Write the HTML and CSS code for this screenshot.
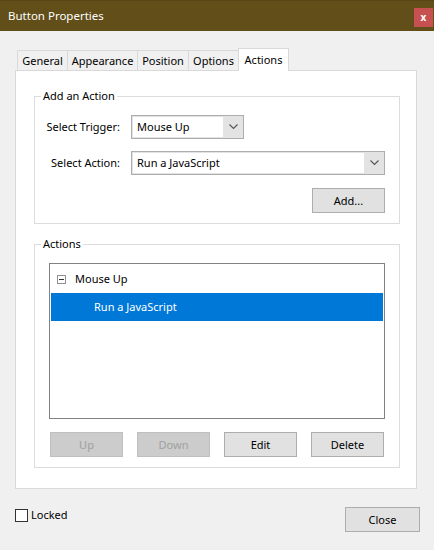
FILE: index.html
```html
<!DOCTYPE html>
<html>
<head>
<meta charset="utf-8">
<link rel="stylesheet" href="styles.css">
</head>
<body>
<div class="window">
  <div class="titlebar">
    <span class="title">Button Properties</span>
    <span class="close-x">x</span>
  </div>
  <div class="main">
    <div class="tabs">
      <div class="tab t1">General</div>
      <div class="tab t2">Appearance</div>
      <div class="tab t3">Position</div>
      <div class="tab t4">Options</div>
      <div class="tab t5 active">Actions</div>
    </div>
    <div class="panel">
      <fieldset class="group g1">
        <legend>Add an Action</legend>
        <div class="form">
          <label class="lbl">Select Trigger:</label>
          <div class="select short">
            <span class="field">Mouse Up</span>
            <span class="arrow"><svg width="9" height="6" viewBox="0 0 9 6"><polyline points="0.5,0.5 4.5,4.5 8.5,0.5" fill="none" stroke="#555" stroke-width="1.1"/></svg></span>
          </div>
          <label class="lbl">Select Action:</label>
          <div class="select long">
            <span class="field">Run a JavaScript</span>
            <span class="arrow"><svg width="9" height="6" viewBox="0 0 9 6"><polyline points="0.5,0.5 4.5,4.5 8.5,0.5" fill="none" stroke="#555" stroke-width="1.1"/></svg></span>
          </div>
        </div>
        <div class="add-row"><button class="btn">Add...</button></div>
      </fieldset>
      <fieldset class="group g2">
        <legend>Actions</legend>
        <div class="list">
          <div class="row parent"><span class="minus"></span><span>Mouse Up</span></div>
          <div class="row child selected">Run a JavaScript</div>
        </div>
        <div class="btns">
          <button class="btn disabled">Up</button>
          <button class="btn disabled">Down</button>
          <button class="btn">Edit</button>
          <button class="btn">Delete</button>
        </div>
      </fieldset>
    </div>
    <div class="footer">
      <label class="check"><span class="box"></span><span>Locked</span></label>
      <button class="btn close-btn">Close</button>
    </div>
  </div>
</div>
</body>
</html>
```
FILE: styles.css
```css
html, body {
  margin: 0;
  padding: 0;
}
body {
  width: 434px;
  height: 550px;
  background: #f0f0f0;
  font-family: "Noto Sans", "Segoe UI", sans-serif;
  font-size: 11px;
  line-height: 16px;
  color: #000;
  overflow: hidden;
}
.window {
  display: flex;
  flex-direction: column;
  height: 550px;
}
.titlebar {
  height: 31px;
  box-sizing: border-box;
  background: #614e19;
  border-top: 1px solid #574615;
  display: flex;
  justify-content: space-between;
  align-items: flex-start;
  color: #fff;
}
.title {
  padding-left: 8px;
  line-height: 30px;
  font-size: 11.5px;
}
.close-x {
  width: 19px;
  height: 19px;
  margin-top: 7px;
  margin-right: 1px;
  background: #c75050;
  color: #fff;
  font-weight: bold;
  font-size: 10px;
  line-height: 18px;
  text-align: center;
}
.main {
  padding-top: 17px;
  display: flex;
  flex-direction: column;
}
.tabs {
  display: flex;
  align-items: flex-end;
  height: 22px;
  margin-left: 17px;
}
.tab {
  box-sizing: border-box;
  height: 20px;
  border: 1px solid #d9d9d9;
  border-bottom: none;
  background: #f0f0f0;
  margin-left: -1px;
  text-align: center;
  line-height: 20px;
  white-space: nowrap;
}
.t1 { margin-left: 0; width: 51px; }
.t2 { width: 71px; }
.t3 { width: 52px; }
.t4 { width: 51px; }
.t5 { width: 51px; }
.tab.active {
  height: 23px;
  background: #fff;
  margin-bottom: -1px;
  position: relative;
  z-index: 1;
  line-height: 21px;
}
.panel {
  box-sizing: border-box;
  margin-left: 15px;
  width: 402px;
  height: 419px;
  background: #fff;
  border: 1px solid #d9d9d9;
  padding: 17px 16px 0 18px;
  display: flex;
  flex-direction: column;
}
.group {
  margin: 0;
  border: 1px solid #dcdcdc;
  padding: 0 14px 10px 14px;
  min-width: 0;
}
.group legend {
  padding: 0 2px;
  margin-left: -8px;
  line-height: 16px;
}
.g2 {
  margin-top: 12px;
}
.form {
  display: grid;
  grid-template-columns: auto 254px;
  justify-content: end;
  column-gap: 11px;
  row-gap: 12px;
  align-items: center;
  padding-top: 11px;
}
.lbl {
  text-align: right;
  white-space: nowrap;
}
.select {
  box-sizing: border-box;
  height: 24px;
  border: 1px solid #adadad;
  background: #e3e3e3;
  padding: 1px 0 1px 1px;
  display: flex;
}
.select.short { width: 113px; }
.select.long { width: 254px; }
.field {
  flex: 1;
  background: #fff;
  padding-left: 4px;
  line-height: 20px;
}
.arrow {
  width: 20px;
  display: flex;
  align-items: center;
  justify-content: center;
}
.add-row {
  display: flex;
  justify-content: flex-end;
  padding-top: 13px;
}
.btn {
  box-sizing: border-box;
  width: 73px;
  height: 25px;
  border: 1px solid #adadad;
  background: #e1e1e1;
  font-family: inherit;
  font-size: 11px;
  color: #000;
  padding: 0;
  margin: 0;
}
.btn.disabled {
  background: #cccccc;
  border-color: #bfbfbf;
  color: #a0a0a0;
}
.list {
  margin-top: 11px;
  box-sizing: border-box;
  height: 156px;
  border: 1px solid #828282;
  padding: 1px;
}
.row {
  height: 28px;
  display: flex;
  align-items: center;
}
.parent {
  padding-left: 6px;
}
.minus {
  box-sizing: border-box;
  width: 9px;
  height: 9px;
  border: 1px solid #919191;
  margin-right: 9px;
  display: flex;
  align-items: center;
  justify-content: center;
}
.minus::before {
  content: "";
  width: 5px;
  height: 1px;
  background: #333;
}
.child {
  padding-left: 43px;
}
.selected {
  background: #0078d7;
  color: #fff;
}
.btns {
  display: flex;
  gap: 14px;
  padding-top: 13px;
  padding-left: 1px;
}
.footer {
  display: flex;
  justify-content: space-between;
  align-items: flex-start;
  padding: 18px 14px 0 15px;
}
.check {
  display: flex;
  align-items: center;
  line-height: 16px;
}
.box {
  box-sizing: border-box;
  width: 13px;
  height: 13px;
  border: 1px solid #333;
  background: #fff;
  margin-right: 3px;
}
.close-btn {
  width: 75px;
  height: 25px;
}
```
